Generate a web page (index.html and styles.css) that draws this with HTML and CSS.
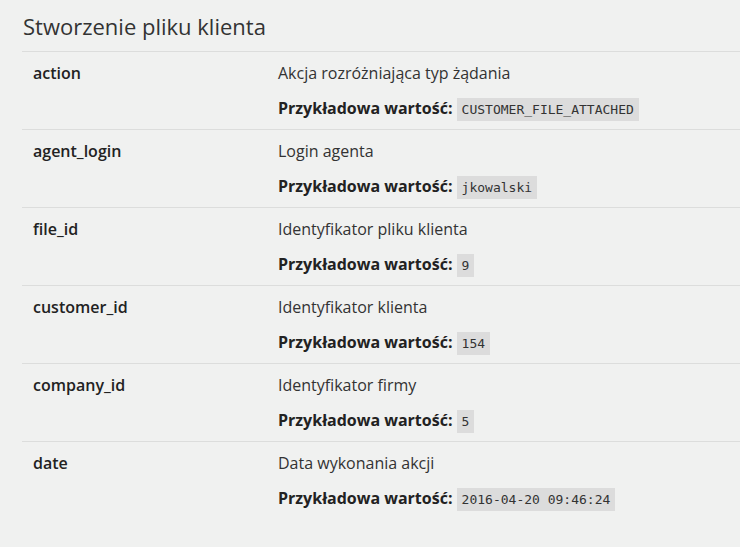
FILE: index.html
```html
<!DOCTYPE html>
<html lang="pl">
<head>
<meta charset="utf-8">
<title>Stworzenie pliku klienta</title>
<link rel="stylesheet" href="styles.css">
</head>
<body>
<div class="section">
  <h2 class="title">Stworzenie pliku klienta</h2>
  <div class="table">
    <div class="row">
      <div class="name">action</div>
      <div class="desc">
        <p class="text">Akcja rozróżniająca typ żądania</p>
        <p class="example"><strong>Przykładowa wartość:</strong> <code>CUSTOMER_FILE_ATTACHED</code></p>
      </div>
    </div>
    <div class="row">
      <div class="name">agent_login</div>
      <div class="desc">
        <p class="text">Login agenta</p>
        <p class="example"><strong>Przykładowa wartość:</strong> <code>jkowalski</code></p>
      </div>
    </div>
    <div class="row">
      <div class="name">file_id</div>
      <div class="desc">
        <p class="text">Identyfikator pliku klienta</p>
        <p class="example"><strong>Przykładowa wartość:</strong> <code>9</code></p>
      </div>
    </div>
    <div class="row">
      <div class="name">customer_id</div>
      <div class="desc">
        <p class="text">Identyfikator klienta</p>
        <p class="example"><strong>Przykładowa wartość:</strong> <code>154</code></p>
      </div>
    </div>
    <div class="row">
      <div class="name">company_id</div>
      <div class="desc">
        <p class="text">Identyfikator firmy</p>
        <p class="example"><strong>Przykładowa wartość:</strong> <code>5</code></p>
      </div>
    </div>
    <div class="row last">
      <div class="name">date</div>
      <div class="desc">
        <p class="text">Data wykonania akcji</p>
        <p class="example"><strong>Przykładowa wartość:</strong> <code>2016-04-20 09:46:24</code></p>
      </div>
    </div>
  </div>
</div>
</body>
</html>
```

FILE: styles.css
```css
html, body {
  margin: 0;
  padding: 0;
  background: #f0f1f0;
}

body {
  font-family: "Open Sans", "Noto Sans", sans-serif;
  color: #333;
  font-size: 16px;
  line-height: 24px;
}

.section {
  padding-left: 22px;
}

.title {
  margin: 0;
  padding-top: 12px;
  padding-left: 1px;
  font-size: 22px;
  font-weight: 400;
  line-height: 29px;
  color: #333;
  height: 29px;
  padding-bottom: 10px;
}

.table {
  border-top: 1px solid #dcdddc;
}

.row {
  display: grid;
  grid-template-columns: 246px 1fr;
  border-bottom: 1px solid #dcdddc;
}

.row.last {
  border-bottom: none;
}

.name {
  padding: 9px 10px 9px 11px;
  font-weight: 600;
  color: #222;
}

.desc {
  padding: 9px 10px 9px 10px;
  display: flex;
  flex-direction: column;
  gap: 11px;
}

.text, .example {
  margin: 0;
}

.example strong {
  font-weight: 700;
  color: #222;
}

code {
  font-family: "DejaVu Sans Mono", "Liberation Mono", monospace;
  font-size: 13px;
  line-height: 18px;
  background: #dcdcdc;
  color: #333;
  padding: 4px 5px;
}
```
